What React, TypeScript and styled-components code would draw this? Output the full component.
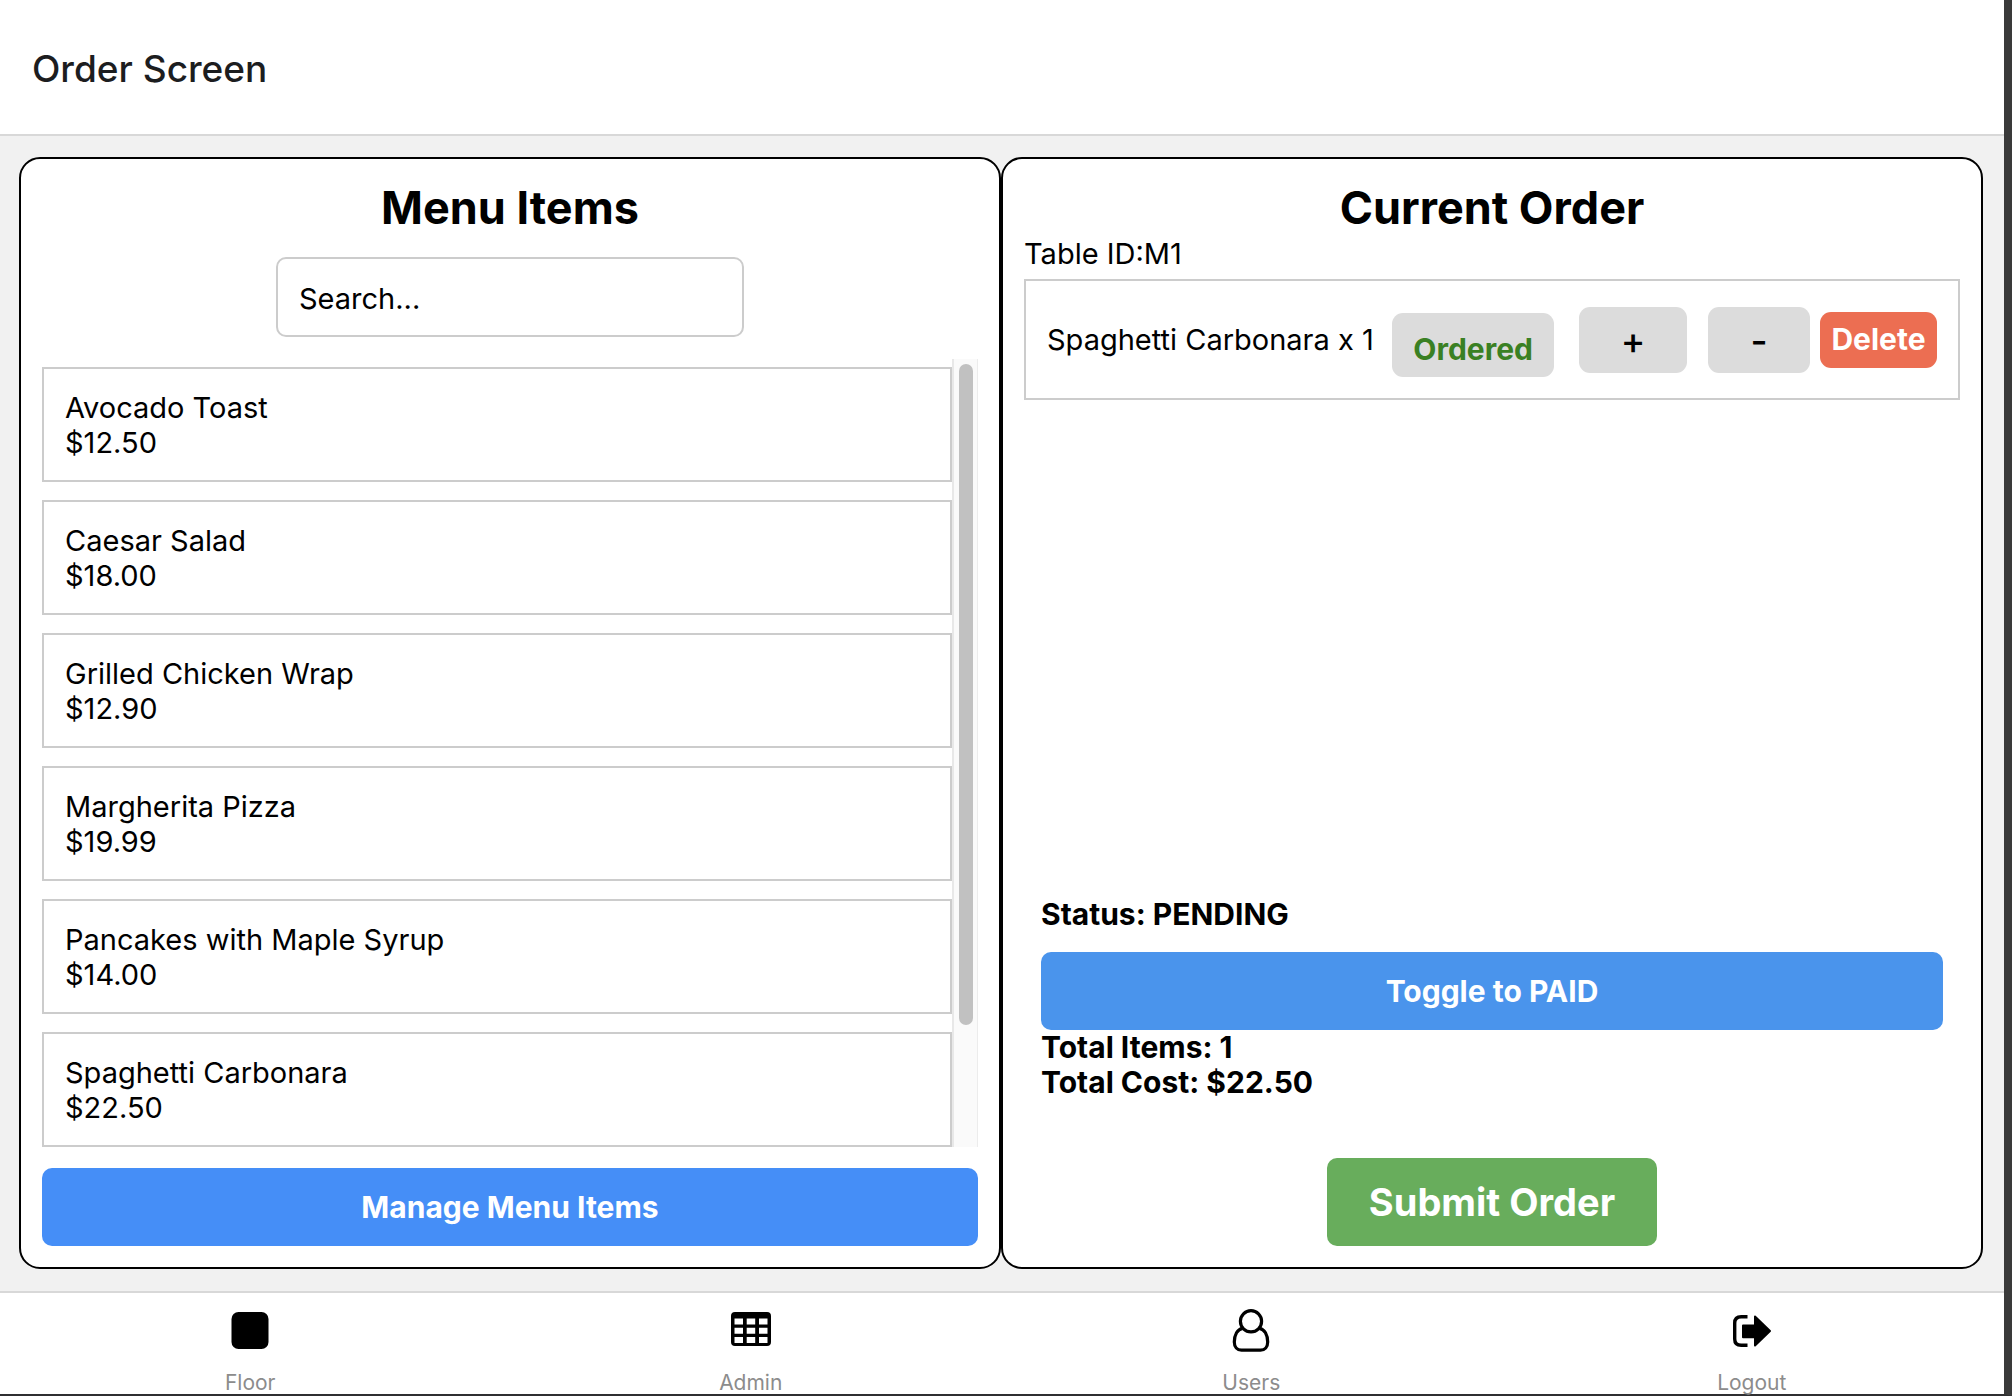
import React, { useState } from "react";
import styled, { createGlobalStyle } from "styled-components";

const GlobalStyle = createGlobalStyle`
  *, *::before, *::after { box-sizing: border-box; }
  body {
    margin: 0;
    background: #3a3a3a;
    color: #000;
    font-family: Inter, "Liberation Sans", sans-serif;
    font-size: 29px;
    line-height: 35px;
  }
  button, input { font: inherit; color: inherit; }
  h1, h2, p, ul { margin: 0; padding: 0; }
`;

const Screen = styled.div`
  display: flex;
  flex-direction: column;
  height: 100vh;
  border-right: 8px solid #3a3a3a;
  border-bottom: 2px solid #2f2f31;
  background: #f1f1f1;
`;

const Header = styled.header`
  padding: 47px 32px 43px;
  border-bottom: 2px solid #d8d8d8;
  background: #fff;
`;

const ScreenTitle = styled.h1`
  font-size: 37px;
  line-height: 44px;
  font-weight: 500;
  color: #1c1d1f;
`;

const Main = styled.main`
  display: grid;
  grid-template-columns: 1fr 1fr;
  flex: 1;
  min-height: 0;
  padding: 21px 21px 22px 19px;
`;

const Panel = styled.section`
  display: flex;
  flex-direction: column;
  min-width: 0;
  min-height: 0;
  padding: 21px;
  border: 2px solid #000;
  border-radius: 21px;
  background: #fff;
`;

const PanelTitle = styled.h2`
  font-size: 45px;
  line-height: 56px;
  font-weight: 700;
  text-align: center;
`;

const SearchInput = styled.input`
  align-self: center;
  width: 50%;
  height: 80px;
  margin: 21px 0 22px;
  padding: 2px 21px 0;
  border: 2px solid #ccc;
  border-radius: 10px;
  background: #fff;
  &::placeholder { color: #000; opacity: 1; }
`;

const ScrollRegion = styled.div`
  display: flex;
  flex: 1;
  min-height: 0;
  margin-bottom: 21px;
`;

const MenuList = styled.ul`
  display: flex;
  flex: 1;
  flex-direction: column;
  gap: 18px;
  padding-top: 8px;
  overflow-y: auto;
  scrollbar-width: none;
  list-style: none;
`;

const MenuItem = styled.li`
  flex-shrink: 0;
  padding: 21px 21px 20px;
  border: 2px solid #ccc;
`;

const ScrollTrack = styled.div`
  width: 26px;
  padding: 5px;
  border-left: 2px solid #e8e8e8;
  border-right: 1px solid #ececec;
  background: #fafafa;
`;

const ScrollThumb = styled.div`
  width: 14px;
  height: 85%;
  border-radius: 7px;
  background: #c1c1c1;
`;

const WideButton = styled.button<{ $color: string }>`
  width: 100%;
  height: 78px;
  padding: 0;
  border: 0;
  border-radius: 10px;
  background: ${(p) => p.$color};
  color: #fff;
  font-size: 30px;
  font-weight: 700;
`;

const OrderList = styled.ul`
  flex: 1;
  padding-top: 8px;
  list-style: none;
`;

const OrderRow = styled.li`
  display: flex;
  align-items: center;
  padding: 21px;
  border: 2px solid #ccc;
`;

const OrderName = styled.span`
  flex: 1;
  white-space: nowrap;
`;

const StatusTag = styled.button`
  height: 64px;
  margin: 11px 25px 0 0;
  padding: 8px 21px 0;
  border: 0;
  border-radius: 11px;
  background: #dcdcdc;
  color: #3a8023;
  font-size: 30px;
  font-weight: 700;
`;

const QuantityButton = styled.button<{ $wide?: boolean }>`
  width: ${(p) => (p.$wide ? 108 : 102)}px;
  height: 66px;
  margin-right: ${(p) => (p.$wide ? 21 : 10)}px;
  padding: 2px 0 0;
  border: 0;
  border-radius: 11px;
  background: #dcdcdc;
  font-size: 37px;
  font-weight: 500;
`;

const DeleteButton = styled.button`
  width: 117px;
  height: 56px;
  padding: 0;
  border: 0;
  border-radius: 11px;
  background: #ec6e52;
  color: #fff;
  font-size: 30px;
  font-weight: 700;
`;

const Summary = styled.div`
  padding: 0 17px;
  font-size: 30px;
  font-weight: 700;
`;

const Status = styled.p`
  margin-bottom: 20px;
`;

const SubmitButton = styled.button`
  align-self: center;
  height: 88px;
  margin-top: 58px;
  padding: 0 42px;
  border: 0;
  border-radius: 10px;
  background: #68ad5c;
  color: #fff;
  font-size: 38px;
  font-weight: 700;
`;

const TabBar = styled.nav`
  display: grid;
  grid-template-columns: repeat(4, 1fr);
  padding-right: 2px;
  border-top: 2px solid #d8d8d8;
  background: #fff;
`;

const Tab = styled.a`
  display: flex;
  flex-direction: column;
  align-items: center;
  gap: 16px;
  padding-top: 13px;
  color: #8c8c8c;
  font-size: 21px;
  line-height: 22px;
  text-decoration: none;
  svg { display: block; color: #000; }
`;

const FloorIcon = () => (
  <svg width="48" height="50" viewBox="0 0 48 50" aria-hidden="true">
    <rect x="5.5" y="6" width="37" height="37" rx="7" fill="currentColor" />
  </svg>
);

const AdminIcon = () => (
  <svg width="48" height="50" viewBox="0 0 48 50" aria-hidden="true">
    <path
      fill="currentColor"
      fillRule="evenodd"
      d="M8 6h32a4 4 0 0 1 4 4v26a4 4 0 0 1-4 4H8a4 4 0 0 1-4-4V10a4 4 0 0 1 4-4zM7.500 12.500v6h8.500v-6zM19.700 12.500v6h8.500v-6zM32 12.500v6h8.500v-6zM7.500 21.700v6h8.500v-6zM19.700 21.700v6h8.500v-6zM32 21.700v6h8.500v-6zM7.500 31v6h8.500v-6zM19.700 31v6h8.500v-6zM32 31v6h8.500v-6z"
    />
  </svg>
);

const UsersIcon = () => (
  <svg width="48" height="50" viewBox="0 0 48 50" fill="none" stroke="currentColor" strokeWidth="3.2" aria-hidden="true">
    <circle cx="24" cy="15.300" r="10.600" />
    <path d="M15.500 22.300C10.500 23 7.300 29 7.300 36c0 5 2.900 8.200 7.200 8.200h19c4.300 0 7.200-3.200 7.200-8.200 0-7-3.200-13-8.200-13.700" />
  </svg>
);

const LogoutIcon = () => (
  <svg width="48" height="50" viewBox="0 0 48 50" aria-hidden="true">
    <path d="M19.500 10.700h-6.300Q6.700 10.700 6.700 17v16q0 6.300 6.500 6.300h6.300" fill="none" stroke="currentColor" strokeWidth="3.400" />
    <path
      fill="currentColor"
      stroke="currentColor"
      strokeWidth="2"
      strokeLinejoin="round"
      d="M27 10.500 42 25 27 39.500V31.200H15V19.500h12z"
    />
  </svg>
);

const menu = [
  { name: "Avocado Toast", price: 12.5 },
  { name: "Caesar Salad", price: 18 },
  { name: "Grilled Chicken Wrap", price: 12.9 },
  { name: "Margherita Pizza", price: 19.99 },
  { name: "Pancakes with Maple Syrup", price: 14 },
  { name: "Spaghetti Carbonara", price: 22.5 },
];

const tabs = [
  { label: "Floor", icon: <FloorIcon /> },
  { label: "Admin", icon: <AdminIcon /> },
  { label: "Users", icon: <UsersIcon /> },
  { label: "Logout", icon: <LogoutIcon /> },
];

export default function App() {
  const [quantity, setQuantity] = useState(1);
  const [paid, setPaid] = useState(false);
  const [query, setQuery] = useState("");

  const shown = menu.filter((m) => m.name.toLowerCase().includes(query.toLowerCase()));

  return (
    <>
      <GlobalStyle />
      <Screen>
        <Header>
          <ScreenTitle>Order Screen</ScreenTitle>
        </Header>
        <Main>
          <Panel>
            <PanelTitle>Menu Items</PanelTitle>
            <SearchInput
              type="text"
              aria-label="Search menu items"
              placeholder="Search..."
              value={query}
              onChange={(e) => setQuery(e.target.value)}
            />
            <ScrollRegion>
              <MenuList>
                {shown.map((m) => (
                  <MenuItem key={m.name}>
                    <p>{m.name}</p>
                    <p>${m.price.toFixed(2)}</p>
                  </MenuItem>
                ))}
              </MenuList>
              <ScrollTrack>
                <ScrollThumb />
              </ScrollTrack>
            </ScrollRegion>
            <WideButton type="button" $color="#458ef7">Manage Menu Items</WideButton>
          </Panel>
          <Panel>
            <PanelTitle>Current Order</PanelTitle>
            <p>Table ID:M1</p>
            <OrderList>
              {quantity > 0 && (
                <OrderRow>
                  <OrderName>Spaghetti Carbonara x {quantity}</OrderName>
                  <StatusTag type="button">Ordered</StatusTag>
                  <QuantityButton type="button" $wide onClick={() => setQuantity(quantity + 1)}>+</QuantityButton>
                  <QuantityButton type="button" onClick={() => setQuantity(quantity - 1)}>-</QuantityButton>
                  <DeleteButton type="button" onClick={() => setQuantity(0)}>Delete</DeleteButton>
                </OrderRow>
              )}
            </OrderList>
            <Summary>
              <Status>Status: {paid ? "PAID" : "PENDING"}</Status>
              <WideButton type="button" $color="#4a94ec" onClick={() => setPaid(!paid)}>
                Toggle to {paid ? "PENDING" : "PAID"}
              </WideButton>
              <p>Total Items: {quantity}</p>
              <p>Total Cost: ${(quantity * 22.5).toFixed(2)}</p>
            </Summary>
            <SubmitButton type="button">Submit Order</SubmitButton>
          </Panel>
        </Main>
        <TabBar>
          {tabs.map((t) => (
            <Tab key={t.label} href={`#${t.label.toLowerCase()}`}>
              {t.icon}
              {t.label}
            </Tab>
          ))}
        </TabBar>
      </Screen>
    </>
  );
}
